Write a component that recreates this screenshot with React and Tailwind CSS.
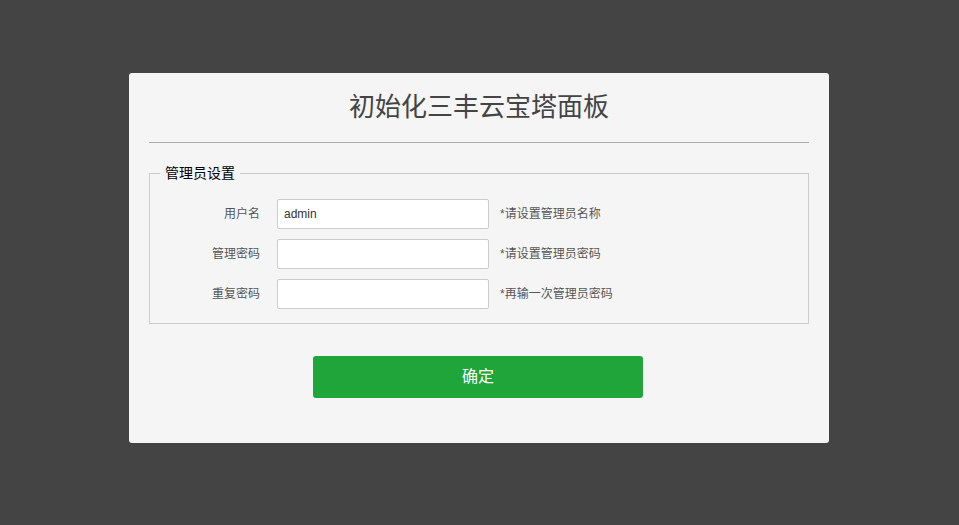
export default function App() {
  const rows = [
    { label: "用户名", value: "admin", hint: "*请设置管理员名称" },
    { label: "管理密码", value: "", hint: "*请设置管理员密码", type: "password" },
    { label: "重复密码", value: "", hint: "*再输一次管理员密码", type: "password" },
  ];

  return (
    <div
      className="min-h-screen w-full bg-[#444444] pt-[73px]"
      style={{ fontFamily: '"Liberation Sans", "Noto Sans CJK SC", sans-serif' }}
    >
      <div className="ml-[129px] w-[700px] rounded-[3px] bg-[#f5f5f5] px-[20px] pb-[45px]">
        {/* title */}
        <div className="flex h-[70px] items-center justify-center border-b border-[#aaaaaa] text-[26px] text-[#444444]">
          初始化三丰云宝塔面板
        </div>

        <fieldset className="mt-[20px] border border-[#cccccc] pb-[14px]">
          <legend className="ml-[10px] px-[5px] text-[14px] leading-[20px] text-black">
            管理员设置
          </legend>
          <div className="mt-[16px] flex flex-col gap-[10px]">
            {rows.map((row, i) => (
              <div key={i} className="flex items-center">
                <label className="w-[110px] text-right text-[12px] text-[#555555]">
                  {row.label}
                </label>
                <input
                  type={row.type || "text"}
                  defaultValue={row.value}
                  className="ml-[17px] h-[30px] w-[212px] rounded-[2px] border border-[#cccccc] bg-white px-[6px] text-[12px] text-[#333333] outline-none"
                />
                <span className="ml-[11px] text-[12px] text-[#555555]">{row.hint}</span>
              </div>
            ))}
          </div>
        </fieldset>

        <div className="mt-[32px] flex">
          <button className="ml-[164px] h-[42px] w-[330px] rounded-[3px] bg-[#20a53a] text-[16px] text-white">
            确定
          </button>
        </div>
      </div>
    </div>
  );
}
